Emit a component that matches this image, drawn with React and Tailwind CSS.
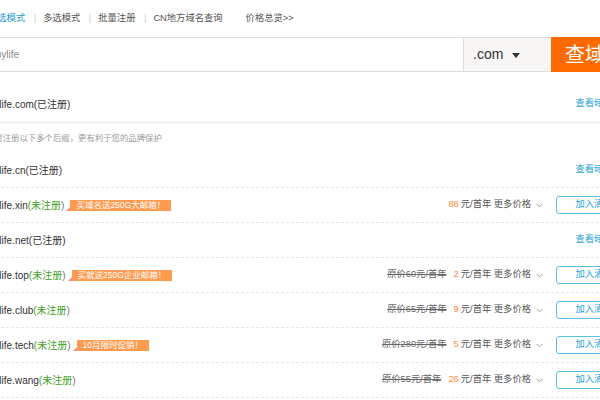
import React from 'react'

const rows = [
  { tld: 'cn', taken: true },
  { tld: 'xin', badge: '买域名送250G大邮箱！', price: '88' },
  { tld: 'net', taken: true },
  { tld: 'top', badge: '买就送250G企业邮箱！', orig: '60', price: '2' },
  { tld: 'club', orig: '65', price: '9' },
  { tld: 'tech', badge: '10月限时促销！', orig: '280', price: '5' },
  { tld: 'wang', orig: '55', price: '26' },
]

function Chevron() {
  return (
    <svg width="7" height="5" viewBox="0 0 7 5" className="ml-[5px] mt-[1px]">
      <polyline points="0.5,0.8 3.5,3.8 6.5,0.8" fill="none" stroke="#999" strokeWidth="1" />
    </svg>
  )
}

function Badge({ text }) {
  return (
    <span className="relative ml-[6px] inline-flex h-[11px] items-center bg-[#ff9b50] px-[6px] text-[8.5px] leading-none text-white">
      <span className="absolute bottom-0 left-[-4px] h-0 w-0 border-t-[4px] border-r-[4px] border-t-transparent border-r-[#f28a8a]" />
      {text}
    </span>
  )
}

function DomainRow({ tld, taken, badge, orig, price, solid }) {
  return (
    <div className={`flex h-[35px] items-center justify-between pr-[7px] ${solid ? '' : 'border-b border-dashed border-[#e6e6e6]'}`}>
      <div className="flex items-center text-[10px] text-[#333]">
        <span>mylife.{tld}</span>
        {taken ? (
          <span>(已注册)</span>
        ) : (
          <span>
            <span className="text-[#45a21f]">(未注册</span>
            <span className="text-[#777]">)</span>
          </span>
        )}
        {badge && <Badge text={badge} />}
      </div>
      <div className="flex items-center">
        {!taken && (
          <div className="mr-[13px] flex items-center text-[9.3px] text-[#555]">
            {orig && <span className="mr-[7px] text-[#666] line-through">原价{orig}元/首年</span>}
            <span className="text-[#ff8a3c]">{price}</span>
            <span className="ml-[2px] whitespace-pre">元/首年 更多价格</span>
            <Chevron />
          </div>
        )}
        <div className="flex w-[76px] justify-center">
          {taken ? (
            <span className="text-[9.3px] text-[#1ca2d6]">查看域名</span>
          ) : (
            <button className="flex h-[18px] w-[76px] items-center justify-center rounded-[3px] border border-[#5cbfe3] bg-white text-[9.3px] text-[#1ca2d6]">
              加入清单
            </button>
          )}
        </div>
      </div>
    </div>
  )
}

export default function App() {
  return (
    <div className="h-[400px] w-[600px] overflow-hidden bg-white font-['Liberation_Sans','Noto_Sans_CJK_SC',sans-serif]">
      <div className="-ml-[14px] w-[653px]">
        {/* tabs */}
        <div className="flex h-[37px] items-center pl-[2px] text-[9.3px] text-[#555]">
          <span className="text-[#1a9bd7]">单选模式</span>
          <span className="ml-[8.5px] mr-[7px] text-[#c8c8c8]">|</span>
          <span>多选模式</span>
          <span className="ml-[8.5px] mr-[7px] text-[#c8c8c8]">|</span>
          <span>批量注册</span>
          <span className="ml-[8.5px] mr-[7px] text-[#c8c8c8]">|</span>
          <span>CN地方域名查询</span>
          <span className="ml-[23px]">价格总览&gt;&gt;</span>
        </div>

        {/* search box */}
        <div className="flex h-[35px]">
          <div className="flex flex-1 items-center border-y border-l border-[#dcdcdc] pl-[6px] text-[10px] text-[#888]">
            mylife
          </div>
          <div className="flex w-[88px] items-center border-y border-l border-[#dcdcdc] bg-[#f7f6f5] pl-[9px] text-[14px] text-[#333]">
            .com
            <svg width="8" height="5" viewBox="0 0 8 5" className="ml-[9px] mt-[1px]">
              <polygon points="0,0 8,0 4,5" fill="#333" />
            </svg>
          </div>
          <div className="flex w-[88px] items-center justify-center bg-[#ff6a00] text-[20px] text-white">查域名</div>
        </div>

        {/* result */}
        <div className="mt-[15px]">
          <div className="flex h-[34px] items-center justify-between pr-[7px]">
            <div className="text-[10px] text-[#333]">mylife.com(已注册)</div>
            <div className="flex w-[76px] justify-center">
              <span className="text-[9.3px] text-[#1ca2d6]">查看域名</span>
            </div>
          </div>
          <div className="h-[3px] bg-[#f4f4f4]" />
          <div className="h-[29px] pt-[8px] text-[8.4px] leading-[12px] text-[#999]">
            同时注册以下多个后缀，更有利于您的品牌保护
          </div>
          {rows.map((r) => (
            <DomainRow key={r.tld} {...r} />
          ))}
        </div>
      </div>
    </div>
  )
}
